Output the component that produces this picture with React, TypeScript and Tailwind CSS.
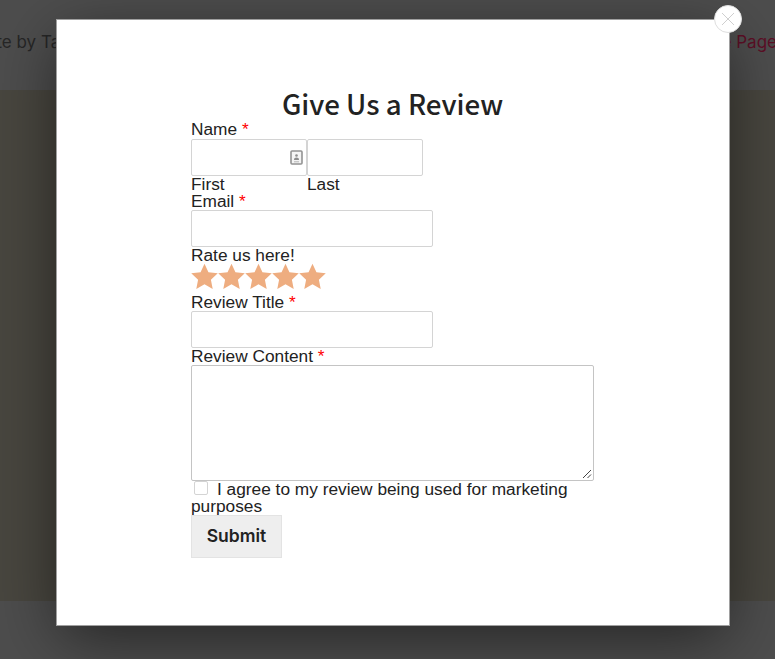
function Req() {
  return <span className="text-[#ff0000]"> *</span>;
}

function Star() {
  return (
    <svg viewBox="0 0 24 24" className="h-[27px] w-[27px] shrink-0" fill="#eead80">
      <path d="M12 .6l3.5 7.6 8.3 1-6.1 5.7 1.6 8.2-7.3-4.1-7.3 4.1 1.6-8.2L.2 9.2l8.3-1z" />
    </svg>
  );
}

const inputCls = "block h-[37px] rounded-[2px] border border-[#d4d4d4] bg-white";

export default function App() {
  return (
    <div className="relative h-[659px] w-[775px] overflow-hidden bg-[#4d4d4d] font-['Liberation_Sans',Arial,sans-serif] text-[17.3px] leading-[18px] text-[#222]">
      {/* page behind the modal */}
      <div className="flex h-full flex-col">
        <header className="flex h-[90px] items-start justify-between overflow-hidden bg-[#4d4d4d] pt-[31px] font-['Inter',sans-serif] text-[17px] leading-[22px]">
          <span className="ml-[-24px] text-[#262626]">Rate by Tag</span>
          <span className="mr-[-2px] text-[#5c0f26]">Home Page</span>
        </header>
        <main className="flex-1 bg-[#48463f]" />
        <footer className="h-[58px] bg-[#4d4d4d]" />
      </div>

      {/* modal */}
      <div className="absolute top-[19px] left-[56px] h-[607px] w-[674px] border border-[#a0a0a0] bg-white shadow-[0_15px_60px_-5px_rgba(0,0,0,0.55)]">
        <form className="ml-[134px] w-[403px] pt-[66px]">
          <h2 className="h-[34px] text-center font-['Noto_Sans_CJK_SC',sans-serif] text-[27.7px] leading-[34px] font-medium text-[#222]">
            Give Us a Review
          </h2>
          <div>
            Name <Req />
          </div>
          <div className="mt-px flex">
            <div className="w-[116px]">
              <div className={`${inputCls} relative w-[116px]`}>
                <svg viewBox="0 0 13 15" className="absolute top-[10px] right-[3px] h-[15px] w-[13px]" fill="none">
                  <rect x="1" y="1" width="11" height="13" rx="1" fill="#f4f4f4" stroke="#939393" strokeWidth="1.6" />
                  <circle cx="6.5" cy="5.5" r="1.3" fill="#8c8c8c" />
                  <path d="M4 10c0-1.6 1-2.4 2.5-2.4S9 8.400 9 10z" fill="#8c8c8c" />
                  <path d="M4 11.800h5" stroke="#b5b5b5" />
                </svg>
              </div>
              <div className="leading-[16px]">First</div>
            </div>
            <div className="w-[116px]">
              <div className={`${inputCls} w-[116px]`} />
              <div className="leading-[16px]">Last</div>
            </div>
          </div>
          <div>
            Email <Req />
          </div>
          <div className={`${inputCls} w-[242px]`} />
          <div className="leading-[16px]">Rate us here!</div>
          <div className="flex h-[27px] items-center">
            <Star />
            <Star />
            <Star />
            <Star />
            <Star />
          </div>
          <div className="mt-[3px]">
            Review Title <Req />
          </div>
          <div className={`${inputCls} w-[242px]`} />
          <div className="leading-[16px]">
            Review Content <Req />
          </div>
          <div className="relative mt-px h-[116px] w-[403px] rounded-[2px] border border-[#c4c4c4] bg-white">
            <svg viewBox="0 0 10 10" className="absolute right-[1px] bottom-[1px] h-[10px] w-[10px]" stroke="#444" strokeWidth="1">
              <path d="M1 9L9 1M5.500 9L9 5.500" />
            </svg>
          </div>
          <div className="w-[403px] leading-[17px]">
            <span className="mr-[9px] ml-[3px] inline-block h-[14px] w-[14px] rounded-[2px] border border-[#d4d4d4] bg-white align-[0px]" />
            I agree to my review being used for marketing purposes
          </div>
          <button
            type="button"
            className="block h-[43px] w-[91px] border border-[#e3e3e3] bg-[#eeeeee] pb-px font-['Inter',sans-serif] text-[17.5px] font-semibold text-[#222]"
          >
            Submit
          </button>
        </form>
      </div>

      {/* close */}
      <div className="absolute top-[5px] left-[714px] flex h-[28px] w-[28px] items-center justify-center rounded-full border border-[#dedede] bg-white">
        <svg viewBox="0 0 14 14" className="h-[14px] w-[14px]" stroke="#cfcfcf" strokeWidth="1">
          <path d="M1 1l12 12M13 1L1 13" />
        </svg>
      </div>
    </div>
  );
}
